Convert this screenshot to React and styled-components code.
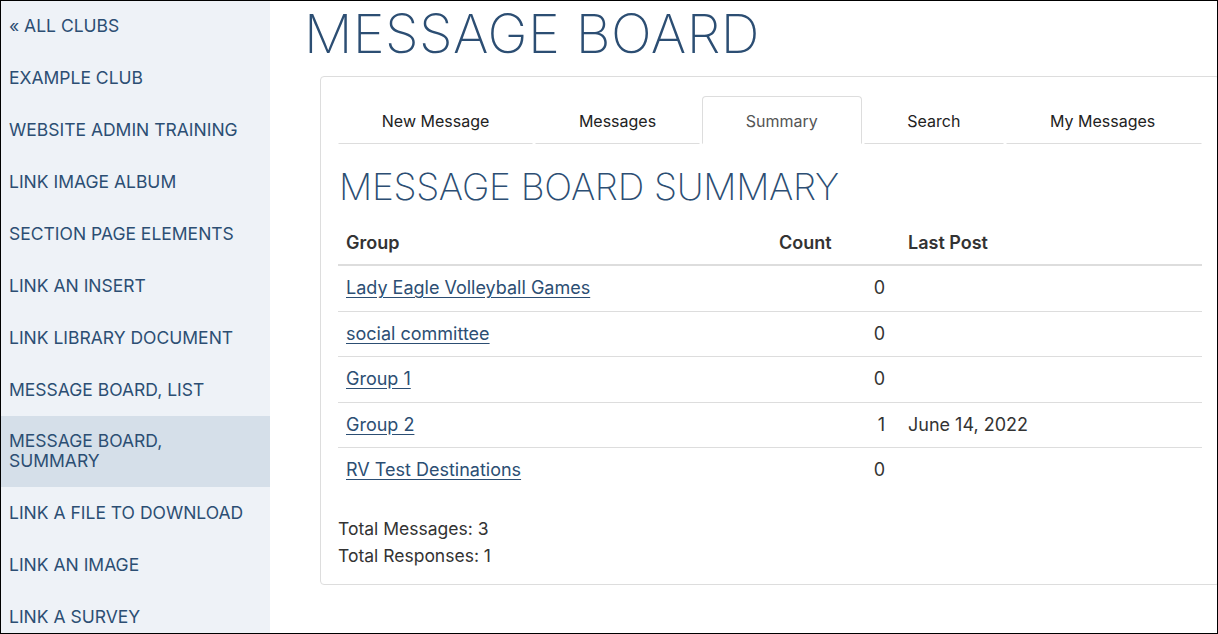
import React from "react";
import styled, { createGlobalStyle } from "styled-components";

const GlobalStyle = createGlobalStyle`
  html, body {
    margin: 0;
    padding: 0;
    background: #fff;
  }
  * {
    box-sizing: border-box;
  }
`;

const Frame = styled.div`
  width: 1218px;
  height: 634px;
  border: 1px solid #000;
  display: flex;
  overflow: hidden;
  font-family: Inter, "Liberation Sans", sans-serif;
`;

const Sidebar = styled.nav`
  width: 269px;
  flex-shrink: 0;
  background: #eef2f7;
  display: flex;
  flex-direction: column;
  margin-top: -1px;
`;

const NavItem = styled.a`
  display: block;
  padding: 15.97px 8px;
  line-height: 20px;
  font-size: 17.5px;
  color: #2c4e73;
  text-transform: uppercase;
  text-decoration: none;
  background: ${(p) => (p.$active ? "#d5dfe9" : "transparent")};
`;

const Main = styled.main`
  flex: 1;
  min-width: 0;
  padding-left: 34px;
`;

const PageTitle = styled.h1`
  margin: 0;
  padding-top: 3px;
  font-size: 54px;
  line-height: 60px;
  font-weight: 200;
  color: #2c4e73;
  letter-spacing: 0.4px;
`;

const Panel = styled.section`
  margin: 12px -3px 0 16px;
  border: 1px solid #ddd;
  border-radius: 4px;
  padding: 19px 17px 15px 17px;
`;

const Tabs = styled.div`
  display: flex;
  gap: 2px;
`;

const Tab = styled.div`
  padding: 0 42.8px;
  height: 48px;
  line-height: 48px;
  font-size: 16px;
  color: ${(p) => (p.$active ? "#555" : "#222")};
  border: 1px solid ${(p) => (p.$active ? "#ddd" : "transparent")};
  border-bottom-color: ${(p) => (p.$active ? "transparent" : "#ddd")};
  border-radius: ${(p) => (p.$active ? "4px 4px 0 0" : "0")};
  white-space: nowrap;
  flex: ${(p) => (p.$grow ? 1 : "none")};
`;

const SectionTitle = styled.h2`
  margin: 21px 0 0 1px;
  font-size: 37px;
  line-height: 44px;
  font-weight: 200;
  letter-spacing: -0.3px;
  color: #2c4e73;
`;

const Table = styled.table`
  width: 100%;
  margin-top: 13px;
  border-collapse: collapse;
  font-size: 18px;
  color: #333;
`;

const HeadCell = styled.th`
  text-align: left;
  font-weight: 600;
  padding: 10px 8px 10px;
  line-height: 22px;
  border-bottom: 2px solid #ddd;
  width: ${(p) => p.$width || "auto"};
`;

const Row = styled.tr`
  border-bottom: 1px solid #ddd;
  &:last-child {
    border-bottom: none;
  }
`;

const Cell = styled.td`
  padding: 11px 8px;
  line-height: 22.5px;
  text-align: ${(p) => p.$align || "left"};
  padding-right: ${(p) => (p.$align === "right" ? "15px" : "8px")};
`;

const GroupLink = styled.a`
  color: #2c4e73;
  text-decoration: underline;
  text-underline-offset: 3px;
`;

const Totals = styled.div`
  margin-top: 22px;
  font-size: 17.5px;
  line-height: 27px;
  color: #333;
`;

const navItems = [
  "« All Clubs",
  "Example Club",
  "Website Admin Training",
  "Link Image Album",
  "Section Page Elements",
  "Link an Insert",
  "Link Library Document",
  "Message Board, List",
  "Message Board, Summary",
  "Link a File to Download",
  "Link an Image",
  "Link a Survey",
];

const tabs = ["New Message", "Messages", "Summary", "Search", "My Messages"];

const groups = [
  { name: "Lady Eagle Volleyball Games", count: 0, last: "" },
  { name: "social committee", count: 0, last: "" },
  { name: "Group 1", count: 0, last: "" },
  { name: "Group 2", count: 1, last: "June 14, 2022" },
  { name: "RV Test Destinations", count: 0, last: "" },
];

export default function App() {
  return (
    <>
      <GlobalStyle />
      <Frame>
        <Sidebar>
          {navItems.map((item) => (
            <NavItem key={item} $active={item === "Message Board, Summary"}>
              {item === "Message Board, Summary" ? (
                <>
                  Message Board,
                  <br />
                  Summary
                </>
              ) : (
                item
              )}
            </NavItem>
          ))}
        </Sidebar>
        <Main>
          <PageTitle>MESSAGE BOARD</PageTitle>
          <Panel>
            <Tabs>
              {tabs.map((t, i) => (
                <Tab key={t} $active={t === "Summary"} $grow={i === tabs.length - 1}>
                  {t}
                </Tab>
              ))}
            </Tabs>
            <SectionTitle>MESSAGE BOARD SUMMARY</SectionTitle>
            <Table>
              <thead>
                <tr>
                  <HeadCell $width="433px">Group</HeadCell>
                  <HeadCell $width="129px">Count</HeadCell>
                  <HeadCell>Last Post</HeadCell>
                </tr>
              </thead>
              <tbody>
                {groups.map((g) => (
                  <Row key={g.name}>
                    <Cell>
                      <GroupLink href="#">{g.name}</GroupLink>
                    </Cell>
                    <Cell $align="right">{g.count}</Cell>
                    <Cell>{g.last}</Cell>
                  </Row>
                ))}
              </tbody>
            </Table>
            <Totals>
              <div>Total Messages: 3</div>
              <div>Total Responses: 1</div>
            </Totals>
          </Panel>
        </Main>
      </Frame>
    </>
  );
}
